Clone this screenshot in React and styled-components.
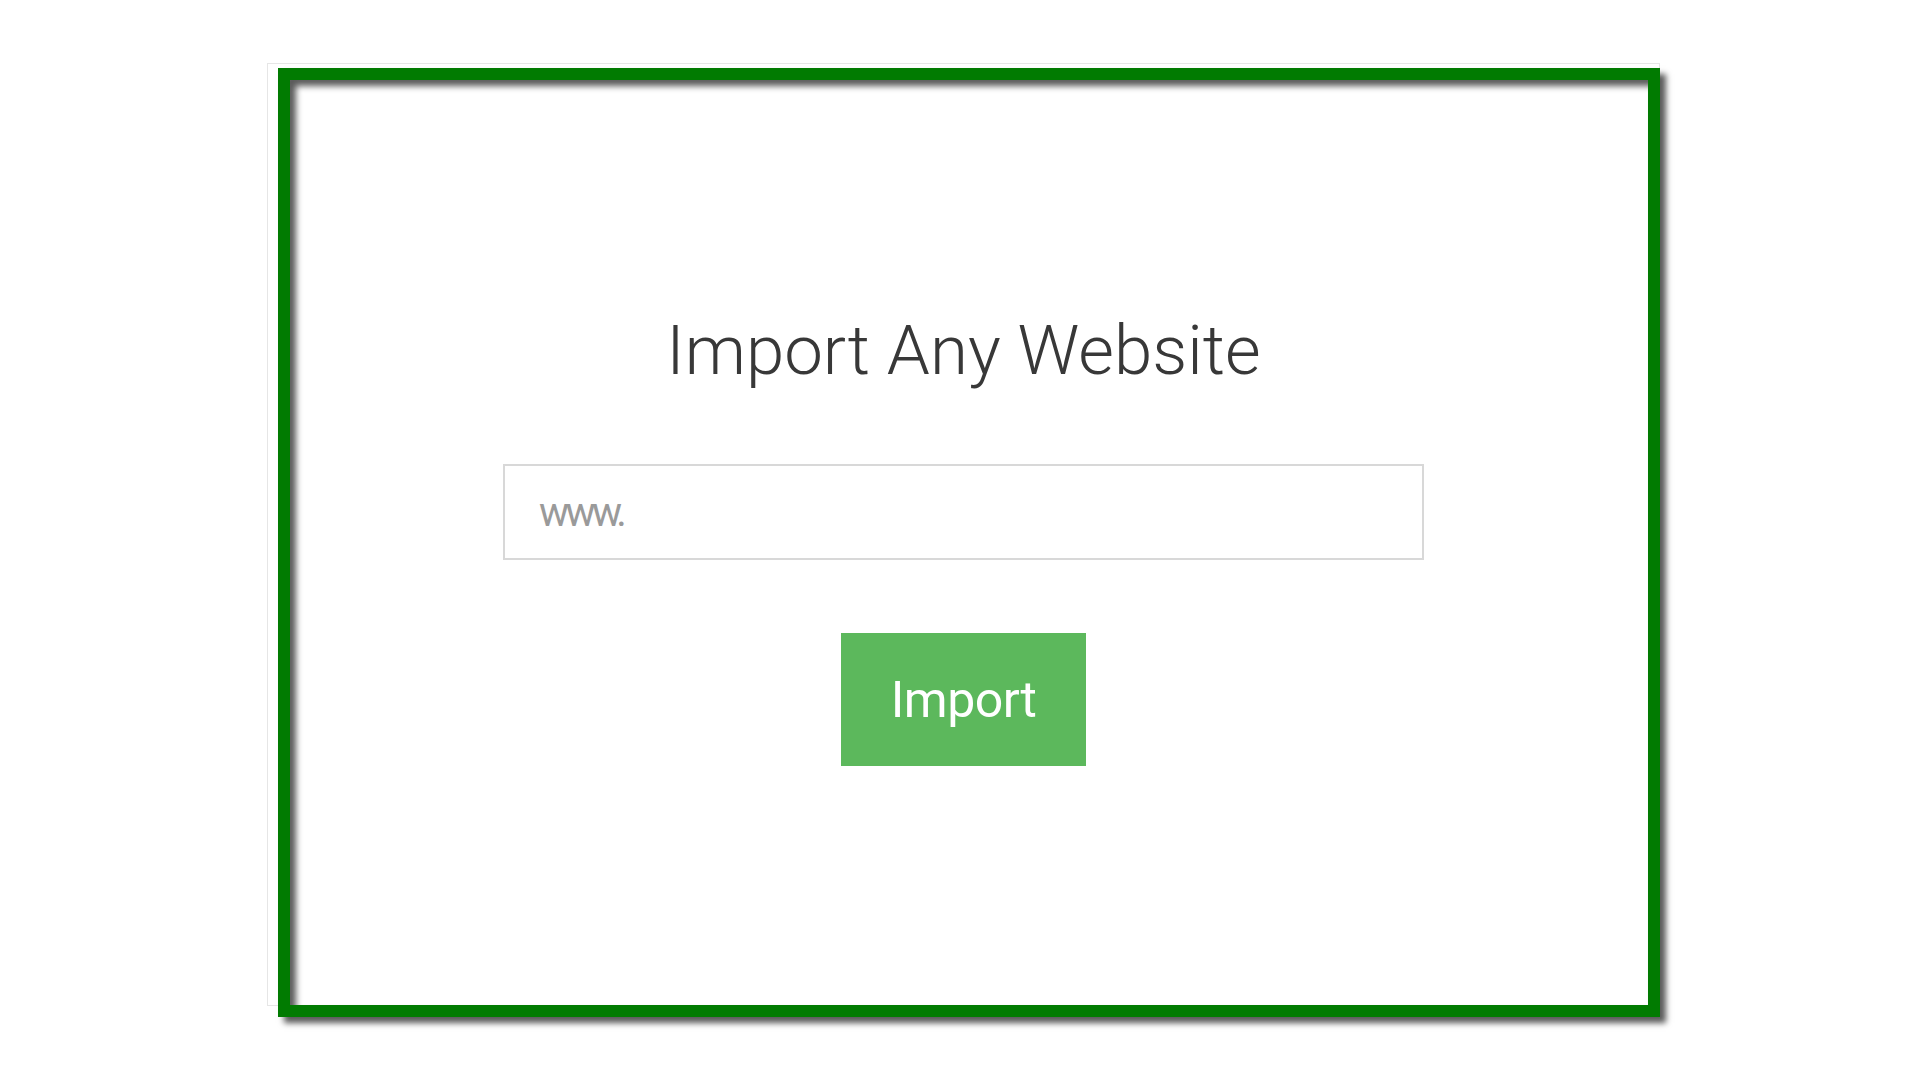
import React from "react";
import styled, { createGlobalStyle } from "styled-components";

const Global = createGlobalStyle`
  html, body { margin: 0; padding: 0; background: #ffffff; }
  body { font-family: Roboto, "Noto Sans", sans-serif; }
`;

const Page = styled.div`
  width: 1920px;
  height: 1080px;
  padding: 63px 0 0 267px;
  box-sizing: border-box;
`;

const Frame = styled.div`
  position: relative;
  width: 1393px;
  height: 943px;
  box-sizing: border-box;
  border: 1px solid #e6e6e6;
  display: flex;
  flex-direction: column;
  align-items: center;
  padding-top: 252px;
`;

const GreenOutline = styled.div`
  position: absolute;
  left: 10px;
  top: 4px;
  width: 1382px;
  height: 949px;
  box-sizing: border-box;
  border: 12px solid #017b01;
  box-shadow: 6px 6px 6px rgba(0, 0, 0, 0.65), inset 6px 6px 6px rgba(0, 0, 0, 0.65);
  pointer-events: none;
`;

const Title = styled.h1`
  margin: 0;
  font-family: Roboto, sans-serif;
  font-weight: 300;
  font-size: 69px;
  line-height: 69px;
  color: #383838;
`;

const UrlInput = styled.input`
  margin-top: 79px;
  width: 921px;
  height: 96px;
  box-sizing: border-box;
  border: 2px solid #d8d8d8;
  padding: 0 34px;
  font-family: Roboto, sans-serif;
  font-size: 40px;
  color: #555;
  outline: none;
  &::placeholder { color: #9a9a9a; letter-spacing: -3.5px; }
`;

const ImportButton = styled.button`
  margin-top: 73px;
  width: 245px;
  height: 133px;
  border: none;
  background: #5cb85c;
  color: #ffffff;
  font-family: Roboto, sans-serif;
  font-size: 50px;
  font-weight: 400;
  letter-spacing: -0.5px;
  cursor: pointer;
`;

export default function App() {
  return (
    <>
      <Global />
      <Page>
        <Frame>
          <Title>Import Any Website</Title>
          <UrlInput placeholder="www." />
          <ImportButton>Import</ImportButton>
          <GreenOutline />
        </Frame>
      </Page>
    </>
  );
}
